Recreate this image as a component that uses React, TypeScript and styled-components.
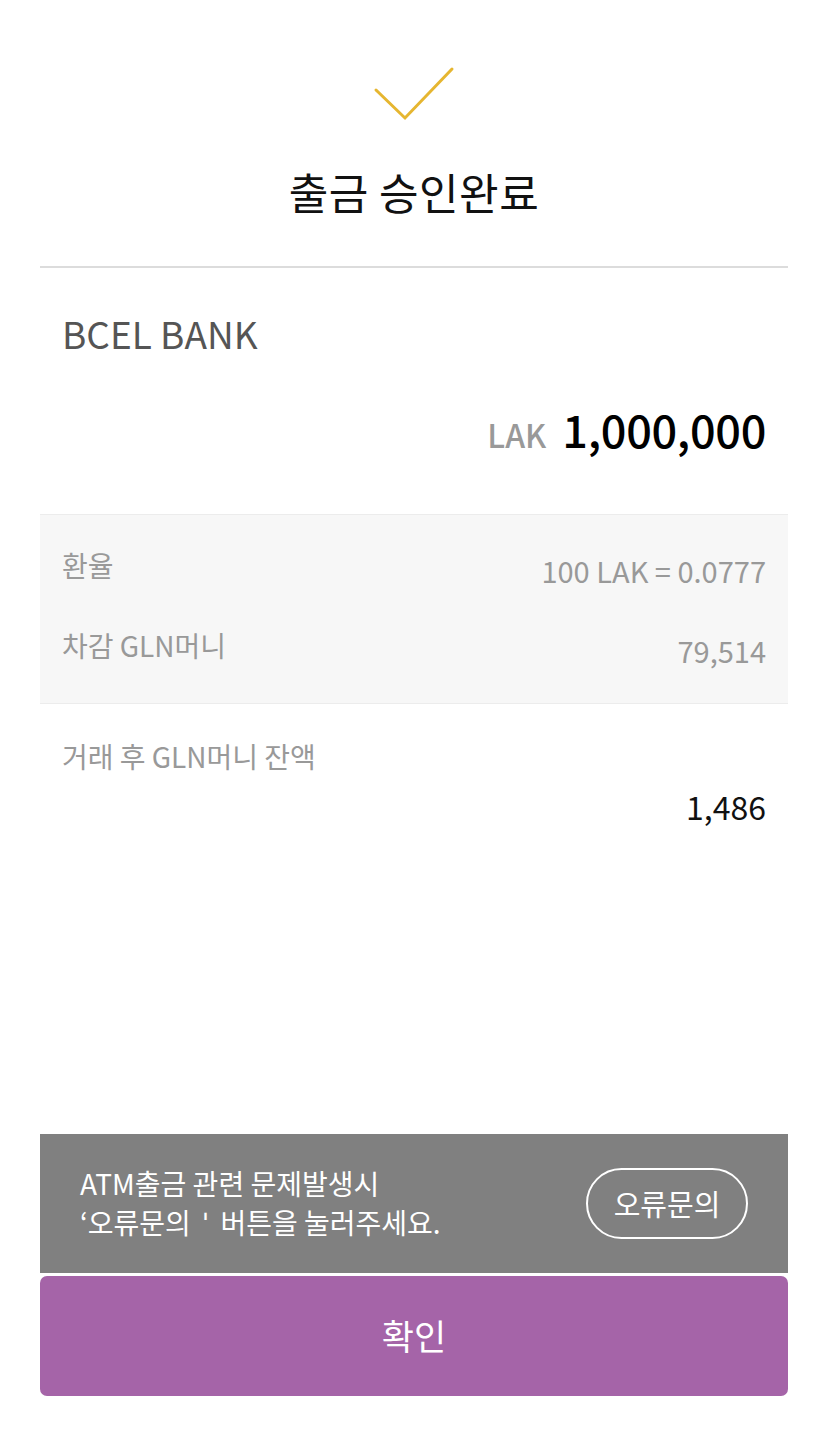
import React from "react";
import styled, { createGlobalStyle } from "styled-components";

const Global = createGlobalStyle`
  html, body { margin: 0; padding: 0; background: #fff; }
  body { font-family: "Noto Sans CJK KR", "Noto Sans", sans-serif; }
  * { box-sizing: border-box; }
`;

const Page = styled.div`
  width: 828px;
  min-height: 1456px;
  padding: 0 40px 60px;
  display: flex;
  flex-direction: column;
`;

const Header = styled.header`
  display: flex;
  flex-direction: column;
  align-items: center;
  padding-top: 64px;
  border-bottom: 2px solid #dcdcdc;
  padding-bottom: 48px;
`;

const Check = styled.svg`
  width: 88px;
  height: 60px;
  display: block;
`;

const Title = styled.h1`
  margin: 40px 0 0;
  font-size: 43px;
  line-height: 54px;
  font-weight: 400;
  color: #111;
  letter-spacing: 0.5px;
`;

const Bank = styled.div`
  padding: 41px 22px 0;
  font-size: 37px;
  line-height: 48px;
  color: #555;
  font-weight: 400;
`;

const AmountRow = styled.div`
  display: flex;
  justify-content: flex-end;
  align-items: baseline;
  gap: 16px;
  padding: 39px 22px 0;
  margin-bottom: 53px;
`;

const Currency = styled.span`
  font-size: 32px;
  color: #999;
  font-weight: 500;
`;

const Amount = styled.span`
  font-size: 45px;
  color: #000;
  font-weight: 500;
  letter-spacing: -0.3px;
`;

const RateBox = styled.section`
  background: #f7f7f7;
  border-top: 1px solid #ececec;
  border-bottom: 1px solid #ececec;
  padding: 33px 22px 31px;
  display: flex;
  flex-direction: column;
  gap: 36px;
`;

const InfoRow = styled.div`
  display: flex;
  justify-content: space-between;
  align-items: flex-end;
  font-size: 28px;
  line-height: 44px;
  color: #999;
`;

const Label = styled.span`
  transform: translateY(-5px);
`;

const Value = styled.span`
  font-size: 29px;
`;

const Balance = styled.section`
  padding: 30px 22px 0;
  display: flex;
  flex-direction: column;
`;

const BalanceLabel = styled.div`
  font-size: 28px;
  line-height: 44px;
  color: #999;
`;

const BalanceValue = styled.div`
  align-self: flex-end;
  font-size: 32px;
  line-height: 48px;
  color: #111;
  margin-top: 4px;
`;

const Bottom = styled.div`
  margin-top: auto;
  display: flex;
  flex-direction: column;
  gap: 3px;
`;

const Notice = styled.div`
  background: #808080;
  height: 139px;
  display: flex;
  align-items: center;
  justify-content: space-between;
  padding: 0 40px;
`;

const NoticeText = styled.p`
  margin: 0;
  color: #fff;
  font-size: 28px;
  line-height: 39px;
  padding-bottom: 2px;
  white-space: pre;
`;

const OutlineButton = styled.button`
  width: 162px;
  height: 71px;
  border: 2px solid #fff;
  border-radius: 36px;
  background: transparent;
  color: #fff;
  font-family: inherit;
  font-size: 29px;
  padding: 0 0 2px;
`;

const Confirm = styled.button`
  height: 120px;
  border: none;
  border-radius: 7px;
  background: #a564a8;
  color: #fff;
  font-family: inherit;
  font-size: 35px;
  padding: 0 0 4px;
`;

export default function App() {
  return (
    <>
      <Global />
      <Page>
        <Header>
          <Check viewBox="0 0 88 60">
            <polyline
              points="6,26 35,54 82,5"
              fill="none"
              stroke="#e6b630"
              strokeWidth="3"
              strokeLinecap="round"
              strokeLinejoin="miter"
            />
          </Check>
          <Title>출금 승인완료</Title>
        </Header>
        <Bank>BCEL BANK</Bank>
        <AmountRow>
          <Currency>LAK</Currency>
          <Amount>1,000,000</Amount>
        </AmountRow>
        <RateBox>
          <InfoRow>
            <Label>환율</Label>
            <Value>100 LAK = 0.0777</Value>
          </InfoRow>
          <InfoRow>
            <Label>차감 GLN머니</Label>
            <Value>79,514</Value>
          </InfoRow>
        </RateBox>
        <Balance>
          <BalanceLabel>거래 후 GLN머니 잔액</BalanceLabel>
          <BalanceValue>1,486</BalanceValue>
        </Balance>
        <Bottom>
          <Notice>
            <NoticeText>{"ATM출금 관련 문제발생시\n‘오류문의  ˈ  버튼을 눌러주세요."}</NoticeText>
            <OutlineButton>오류문의</OutlineButton>
          </Notice>
          <Confirm>확인</Confirm>
        </Bottom>
      </Page>
    </>
  );
}
